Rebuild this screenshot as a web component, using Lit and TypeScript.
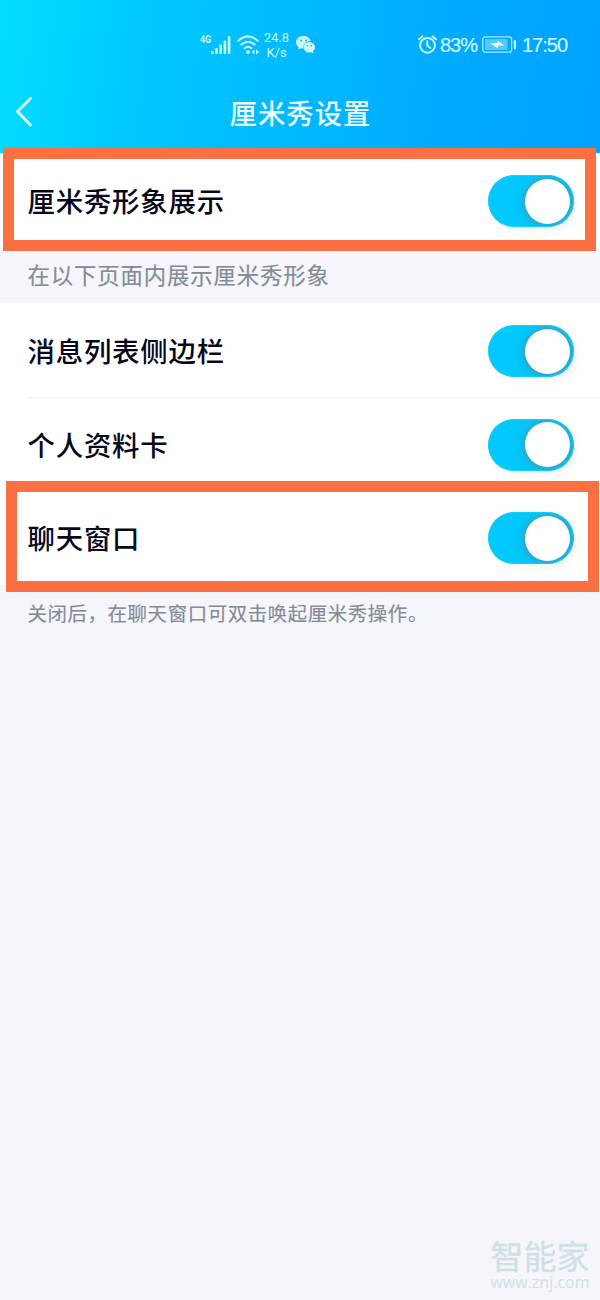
import { LitElement, html, css, svg } from "lit";
import { customElement, property } from "lit/decorators.js";

@customElement("toggle-switch")
class ToggleSwitch extends LitElement {
  static styles = css`
    :host { display: block; flex: none; }
    .track {
      box-sizing: border-box; width: 86px; height: 52px; padding: 3px 4px 3px 0;
      border-radius: 26px; display: flex; justify-content: flex-end; align-items: center;
      background: #02c8fd; overflow: hidden; position: relative;
    }
    .track::after {
      content: ""; position: absolute; inset: 0; border-radius: 26px;
      box-shadow: inset 0 0 0 1px rgba(20, 214, 250, 0.7);
    }
    .knob {
      width: 45px; height: 45px; border-radius: 50%; background: #fff;
      box-shadow: 0 0 0 3px rgba(50, 170, 205, 0.55), 0 1px 8px 2px rgba(60, 145, 170, 0.6);
    }
    .halo { border-radius: 26px; box-shadow: 5px 5px 9px -3px rgba(60, 80, 100, 0.09); }
  `;
  render() {
    return html`<div class="halo"><div class="track"><div class="knob"></div></div></div>`;
  }
}

@customElement("setting-row")
class SettingRow extends LitElement {
  @property() label = "";
  static styles = css`
    :host { display: block; height: 100%; }
    .row {
      height: 100%; box-sizing: border-box; padding: 0 26px 0 27.5px;
      display: flex; align-items: center; justify-content: space-between;
    }
    .label {
      font-size: 27.4px; line-height: 40px; letter-spacing: 0.8px; font-weight: 500;
      color: #05081a; white-space: nowrap; margin-bottom: 2px;
    }
  `;
  render() {
    return html`<div class="row"><span class="label">${this.label}</span><toggle-switch></toggle-switch></div>`;
  }
}

const signal = svg`<g fill="currentColor">
  <rect x="0" y="15" width="2.6" height="3" rx="1"/><rect x="4.2" y="12" width="2.6" height="6" rx="1"/>
  <rect x="8.4" y="8.5" width="2.6" height="9.5" rx="1"/><rect x="12.6" y="4.5" width="2.6" height="13.5" rx="1"/>
  <rect x="16.8" y="0" width="2.6" height="18" rx="1"/></g>`;

const wifi = svg`<g fill="none" stroke="currentColor" stroke-width="2" stroke-linecap="round">
  <path d="M1.2 4.8Q11 -4 20.8 4.8"/><path d="M4.4 8.6Q11 2.8 17.6 8.6"/><path d="M7.6 12.2Q11 9.2 14.4 12.2"/></g>
  <circle cx="11" cy="16" r="1.9" fill="currentColor"/>
  <path d="M17.5 13.5V18.5L14.5 16ZM19 13.5V18.5L22 16Z" fill="currentColor"/>`;

const wechat = svg`<path fill="currentColor" d="M7.6 0C3.4 0 0 2.8 0 6.3c0 2 1.1 3.7 2.8 4.9L2.1 13.6l2.8-1.4c.8.2 1.6.4 2.5.4C6.5 8.4 10 5 14.8 5 14.1 2.1 11.2 0 7.6 0Z"/>
  <path fill="currentColor" d="M19 11.2c0-3-2.6-5.3-5.7-5.3s-5.7 2.3-5.7 5.3 2.6 5.3 5.7 5.3c.7 0 1.3-.1 1.9-.3l2.2 1.2-.6-2c1.3-1 2.2-2.5 2.2-4.2Z"/>
  <g fill="#08b3fe"><circle cx="5" cy="4.4" r="1"/><circle cx="10" cy="4.4" r="1"/><circle cx="11.4" cy="9.8" r=".8"/><circle cx="15.3" cy="9.8" r=".8"/></g>`;

const alarm = svg`<g fill="none" stroke="currentColor" stroke-width="2" stroke-linecap="round">
  <circle cx="9.5" cy="10.3" r="7.4"/><path d="M9.3 6.3V10.6L12.3 13"/><path d="M1 4.2L4.4 1.3M18 4.2L14.6 1.3"/></g>`;

const battery = svg`<rect x=".8" y=".8" width="28.8" height="15.4" rx="2.5" fill="none" stroke="currentColor" stroke-opacity=".85" stroke-width="1.3"/>
  <rect x="3" y="3" width="22.5" height="11" fill="currentColor" opacity=".42"/>
  <path d="M8.5 7.4L15.5 7.2V4.6L22 9.4L15.8 9.4V12.3Z" fill="#fff"/>
  <rect x="31.8" y="4" width="2.2" height="9.5" rx="1" fill="currentColor"/>`;

@customElement("app-root")
class AppRoot extends LitElement {
  static styles = css`
    :host {
      display: block; position: relative; width: 600px; height: 1300px; overflow: hidden;
      background: #f4f6fb; font-family: "Noto Sans CJK SC", sans-serif;
    }
    svg { display: block; overflow: visible; flex: none; }
    .header { height: 153px; background: linear-gradient(98deg, #00deff 0%, #00c6ff 27%, #00b6ff 55%, #00a7ff 80%, #00a2ff 100%); }
    .status {
      height: 76px; box-sizing: border-box; padding: 13px 33px 0 200px; display: flex; align-items: center;
      color: #cbf8ff; font-family: Roboto, sans-serif; white-space: nowrap;
    }
    .net { font-size: 10.5px; line-height: 12px; font-weight: 700; width: 11px; margin-bottom: 10px; transform: scaleX(0.85); transform-origin: left; }
    .wifi { margin-left: 5.5px; }
    .speed { width: 30px; margin-left: 3px; text-align: center; font-size: 13px; line-height: 15px; }
    .chat { margin-left: 4.5px; }
    .alarm { margin-left: auto; }
    .big { font-family: "Liberation Sans", sans-serif; font-size: 20px; line-height: 24px; letter-spacing: -1px; -webkit-text-stroke: 0.2px currentColor; }
    .percent { margin-left: 3px; width: 36px; }
    .battery { margin-left: 6px; }
    .time { margin-left: 6px; width: 45px; }
    .nav { height: 77px; display: grid; grid-template-columns: 60px 1fr 60px; align-items: center; color: #eafcff; }
    .back { margin: -6px 0 0 16px; }
    .title { text-align: center; font-size: 27.4px; line-height: 40px; letter-spacing: 1px; font-weight: 500; margin: -6px 0 0 1px; }
    .cell { background: #fff; height: 96px; }
    .group { background: #fff; }
    .item { height: 93.5px; box-sizing: border-box; }
    .item.first { height: 95px; padding-top: 1px; }
    .line { height: 1px; margin: -1px 0 0 27px; background: #eeeff1; }
    .caption { height: 54px; padding-left: 27.5px; font-size: 22.4px; line-height: 51px; letter-spacing: 0.85px; color: #858a97; white-space: nowrap; }
    .note { padding: 13px 0 0 27.5px; font-size: 19.4px; line-height: 30px; letter-spacing: 0.63px; color: #858a97; white-space: nowrap; }
    .caption, .note { -webkit-text-stroke: 0.15px currentColor; }
    .frame { position: absolute; box-sizing: border-box; border: 11px solid #fa7043; }
    .frame.one { left: 3px; top: 148px; width: 593px; height: 103px; }
    .frame.two { left: 6px; top: 481px; width: 593px; height: 111px; }
    .mark { position: absolute; right: 10px; bottom: 10px; width: 100px; color: #d0dfe4; display: flex; flex-direction: column; align-items: center; gap: 2px; white-space: nowrap; }
    .brand { font-size: 33px; line-height: 33px; font-weight: 400; -webkit-text-stroke: 0.3px currentColor; }
    .site { font-family: "Open Sans", sans-serif; font-size: 16px; line-height: 16px; }
  `;
  render() {
    return html`
      <div class="header">
        <div class="status">
          <span class="net">4G</span>
          <svg width="20" height="18">${signal}</svg>
          <svg class="wifi" width="22" height="18">${wifi}</svg>
          <div class="speed">24.8<br />K/s</div>
          <svg class="chat" width="19" height="18">${wechat}</svg>
          <svg class="alarm" width="19" height="19">${alarm}</svg>
          <span class="big percent">83%</span>
          <svg class="battery" width="34" height="17">${battery}</svg>
          <span class="big time">17:50</span>
        </div>
        <div class="nav">
          <svg class="back" width="17" height="30"><path d="M14.5 1.5L1.5 14.5L14.5 28" fill="none" stroke="currentColor" stroke-width="2.8" stroke-linecap="round" stroke-linejoin="round"/></svg>
          <div class="title">厘米秀设置</div>
        </div>
      </div>
      <div class="cell"><setting-row label="厘米秀形象展示"></setting-row></div>
      <div class="caption">在以下页面内展示厘米秀形象</div>
      <div class="group">
        <div class="item first"><setting-row label="消息列表侧边栏"></setting-row></div>
        <div class="line"></div>
        <div class="item"><setting-row label="个人资料卡"></setting-row></div>
        <div class="item"><setting-row label="聊天窗口"></setting-row></div>
      </div>
      <div class="note">关闭后，在聊天窗口可双击唤起厘米秀操作。</div>
      <div class="frame one"></div>
      <div class="frame two"></div>
      <div class="mark"><div class="brand">智能家</div><div class="site">www.znj.com</div></div>
    `;
  }
}
